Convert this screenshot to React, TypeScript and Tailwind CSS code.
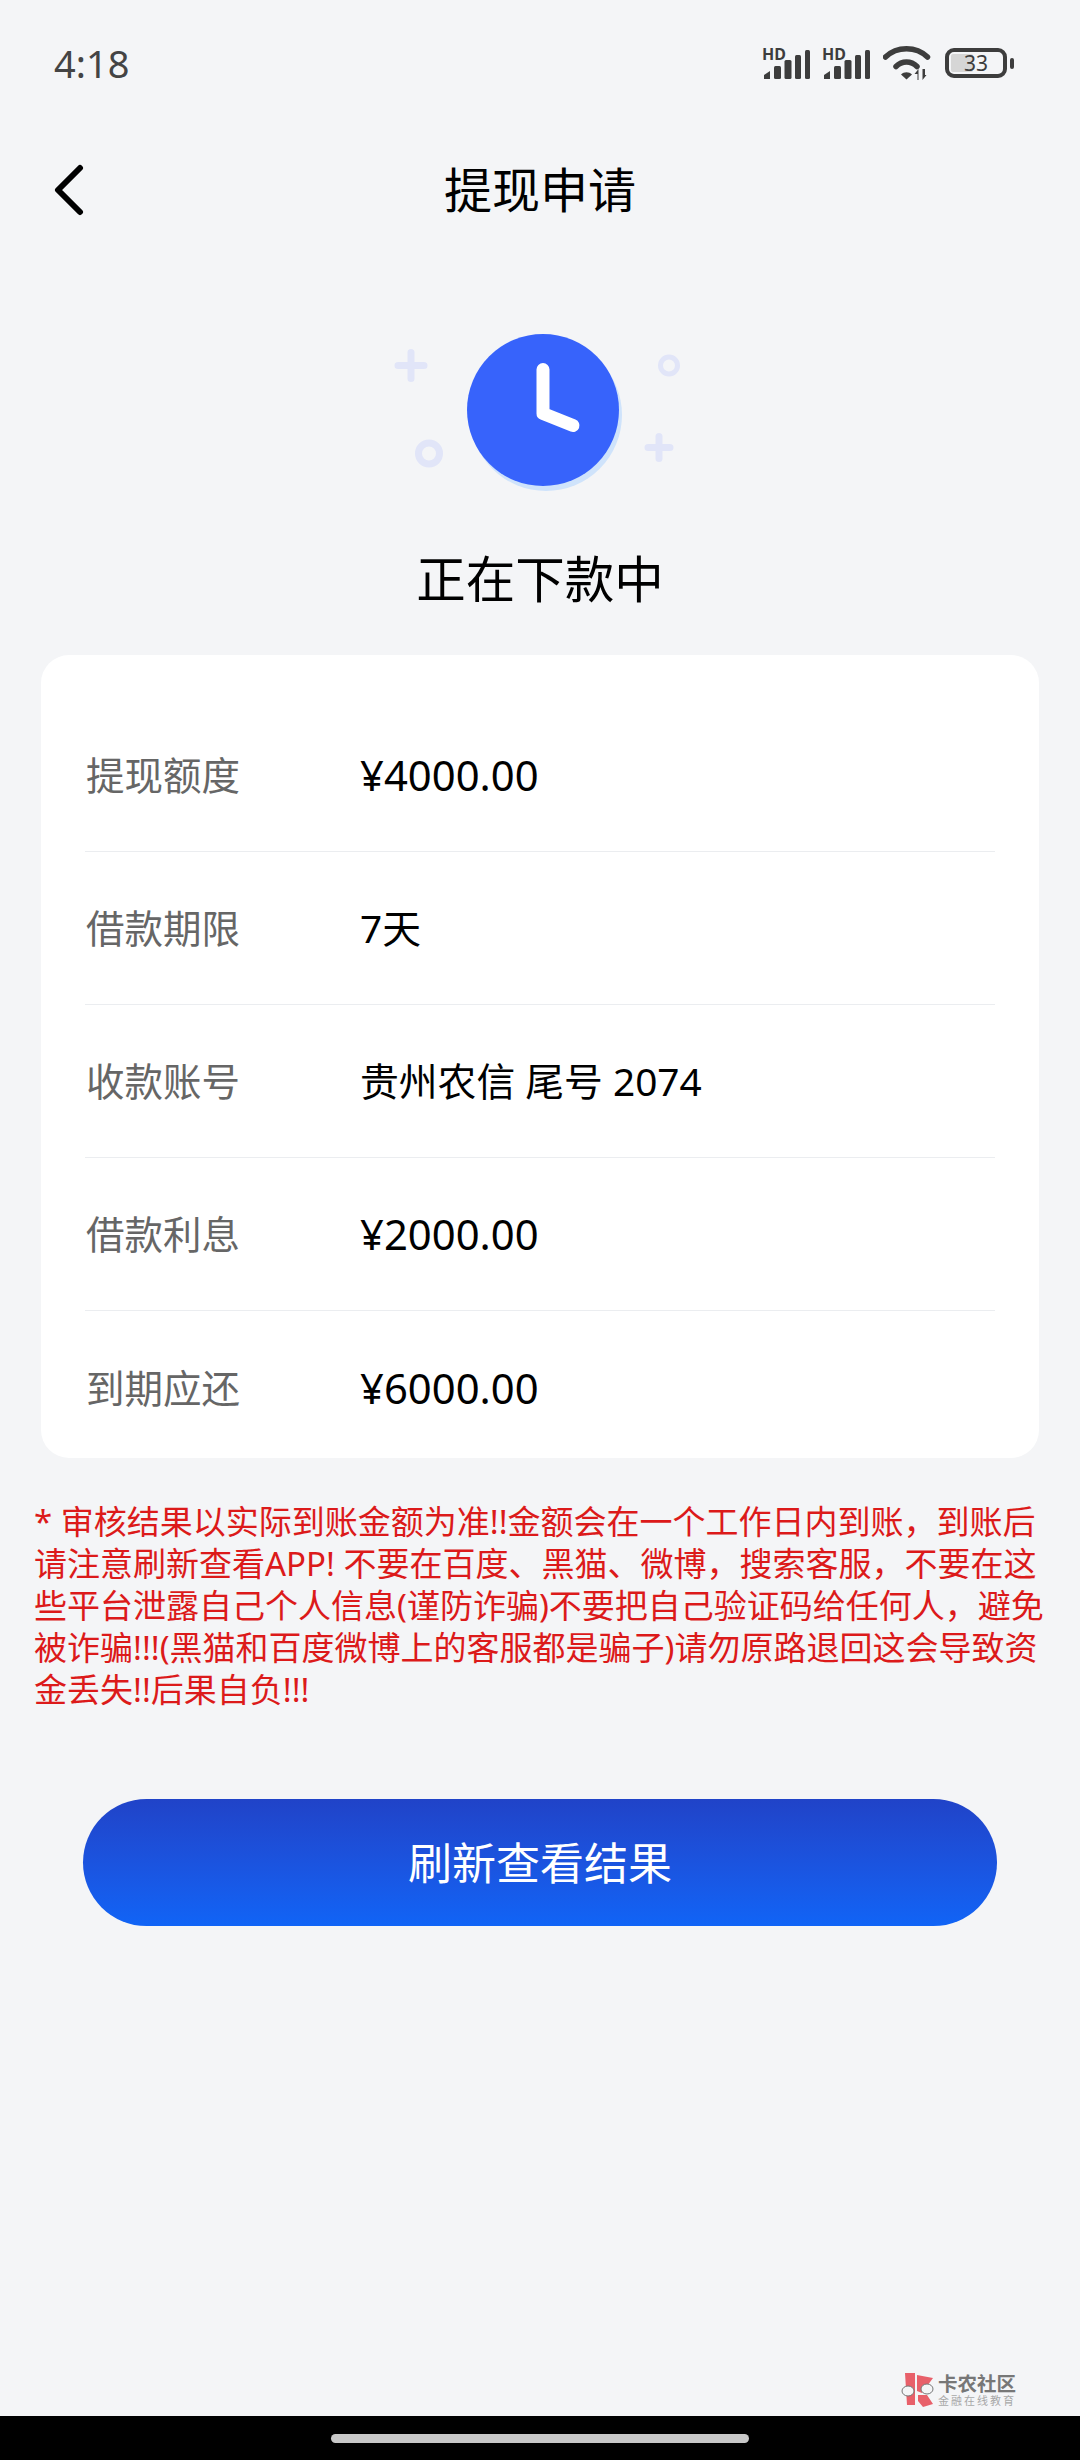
import React from 'react';

const font = { fontFamily: '"Noto Sans", "Noto Sans CJK SC", sans-serif' };

const rows = [
  { label: '提现额度', value: '¥4000.00', money: true },
  { label: '借款期限', value: '7天', money: false },
  { label: '收款账号', value: '贵州农信 尾号 2074', money: false },
  { label: '借款利息', value: '¥2000.00', money: true },
  { label: '到期应还', value: '¥6000.00', money: true },
];

const notice = [
  '* 审核结果以实际到账金额为准!!金额会在一个工作日内到账，到账后',
  '请注意刷新查看APP! 不要在百度、黑猫、微博，搜索客服，不要在这',
  '些平台泄露自己个人信息(谨防诈骗)不要把自己验证码给任何人，避免',
  '被诈骗!!!(黑猫和百度微博上的客服都是骗子)请勿原路退回这会导致资',
  '金丢失!!后果自负!!!',
];

function Signal() {
  return (
    <div className="relative w-[48px] h-[31px]">
      <span className="absolute left-0 top-[-3px] text-[16px] leading-[18px] font-bold text-[#3d3d3d]">HD</span>
      <svg width="48" height="31" viewBox="0 0 48 31" className="absolute left-0 top-0">
        <g fill="#3d3d3d">
          <path d="M2 31v-4l6-4v8z" />
          <rect x="12" y="18" width="7" height="13" rx="1.500" />
          <rect x="22.500" y="12" width="7" height="19" rx="1.500" />
          <rect x="33" y="7" width="6" height="24" rx="1.500" />
          <rect x="43" y="2" width="5" height="29" rx="1.500" />
        </g>
      </svg>
    </div>
  );
}

function Wifi() {
  return (
    <svg width="48" height="34" viewBox="0 0 48 34" fill="none">
      <path d="M2.500 11C14 0 33 0 44.500 11" stroke="#3d3d3d" strokeWidth="5.500" strokeLinecap="round" />
      <path d="M13 20.500C19 14.500 28 14.500 34 20.500" stroke="#3d3d3d" strokeWidth="5.500" strokeLinecap="round" />
      <path d="M18 28.500c3-3 8-3 11 0l-5.500 5z" fill="#3d3d3d" />
      <path d="M34.500 34v-6h-3l4-5v11zM39.500 23v11l4-5h-1.500v-6z" fill="#3d3d3d" />
    </svg>
  );
}

export default function App() {
  return (
    <div className="relative w-[1080px] h-[2460px] bg-[#f4f5f7] overflow-hidden" style={font}>
      <div className="flex items-center justify-between h-[126px] pl-[54px] pr-[66px]">
        <span className="text-[38px] leading-[50px] text-[#444444]">4:18</span>
        <div className="flex items-center">
          <Signal />
          <div className="ml-[12px]"><Signal /></div>
          <div className="ml-[13px]"><Wifi /></div>
          <div className="ml-[14px] flex items-center gap-[3px]">
            <div className="flex items-center w-[62px] h-[30px] border-[4px] border-[#3d3d3d] rounded-[9px] p-[2px] relative">
              <div className="w-[22px] h-full bg-[#d6d6d6] rounded-[2px]" />
              <span className="absolute inset-0 flex items-center justify-center text-[21px] leading-none text-[#3d3d3d]">33</span>
            </div>
            <div className="w-[4px] h-[11px] bg-[#3d3d3d] rounded-full" />
          </div>
        </div>
      </div>

      <div className="relative flex items-center justify-center h-[128px]">
        <svg width="34" height="52" viewBox="0 0 34 52" fill="none" className="absolute left-[52px] top-[38px]">
          <path d="M28 4L6 26l22 22" stroke="#000000" strokeWidth="6" strokeLinecap="round" strokeLinejoin="round" />
        </svg>
        <h1 className="mb-[1px] text-[48px] leading-[64px] font-normal text-black">提现申请</h1>
      </div>

      <div className="flex justify-center mt-[80px]">
        <svg width="300" height="170" viewBox="0 0 300 170" fill="none">
          <circle cx="156" cy="81" r="76" fill="#cfe3fb" />
          <circle cx="153" cy="76" r="76" fill="#3763fb" />
          <path d="M153 35.500v44l30 12" stroke="#ffffff" strokeWidth="13" strokeLinecap="round" strokeLinejoin="round" />
          <path d="M8 31.500h26M21 18.500v26" stroke="#e1e5f8" strokeWidth="7" strokeLinecap="round" />
          <path d="M258 113.500h22M269 102.500v22" stroke="#e1e5f8" strokeWidth="7" strokeLinecap="round" />
          <circle cx="279" cy="31.500" r="8.500" stroke="#e1e5f8" strokeWidth="5" />
          <circle cx="39" cy="119.500" r="10.500" stroke="#e1e5f8" strokeWidth="7" />
        </svg>
      </div>

      <h2 className="mt-[42px] text-center text-[49.500px] leading-[66px] font-normal text-black">正在下款中</h2>

      <div className="mx-[41px] mt-[43px] h-[803px] bg-white rounded-[28px] px-[44px] pt-[44px]">
        {rows.map((row, i) => (
          <div
            key={row.label}
            className={'flex items-center h-[153px] pl-[1px] ' + (i < rows.length - 1 ? 'border-b border-[#ebedf0]' : '')}
          >
            <span className="w-[274px] text-[38.500px] leading-[50px] text-[#666666]">{row.label}</span>
            <span className={(row.money ? 'text-[41.800px]' : 'text-[38.800px]') + ' leading-[50px] text-black'}>
              {row.value}
            </span>
          </div>
        ))}
      </div>

      <div className="mt-[43px] pl-[34px] text-[33px] leading-[42px] text-[#dc1a1a] whitespace-nowrap">
        {notice.map((line) => (
          <div key={line}>{line}</div>
        ))}
      </div>

      <button className="block mx-auto mt-[88px] w-[914px] h-[127px] rounded-full bg-gradient-to-b from-[#2043c8] to-[#1064f6] text-white text-[44px] leading-[60px]">
        刷新查看结果
      </button>

      <div className="absolute left-[900px] top-[2373px] flex items-start gap-[4px]">
        <svg width="34" height="34" viewBox="0 0 34 34" fill="none">
          <path d="M5 0h10v32H7zM17 2l16 3-11 15-5-2zM18 22h9l6 9-10 3-5-6z" fill="#e8606a" />
          <ellipse cx="8" cy="18" rx="6" ry="5" fill="#f4f5f7" stroke="#777777" strokeWidth="1" />
          <ellipse cx="27" cy="16" rx="6" ry="5" fill="#f4f5f7" stroke="#777777" strokeWidth="1" />
        </svg>
        <div className="flex flex-col">
          <span className="text-[19.500px] leading-[22px] font-bold text-[#777777]">卡农社区</span>
          <span className="text-[11px] leading-[12px] tracking-[2px] text-[#a8a8a8]">金融在线教育</span>
        </div>
      </div>

      <div className="absolute left-0 bottom-0 w-full h-[44px] bg-black flex items-center justify-center">
        <div className="w-[418px] h-[9px] rounded-full bg-[#c8c8c8]" />
      </div>
    </div>
  );
}
